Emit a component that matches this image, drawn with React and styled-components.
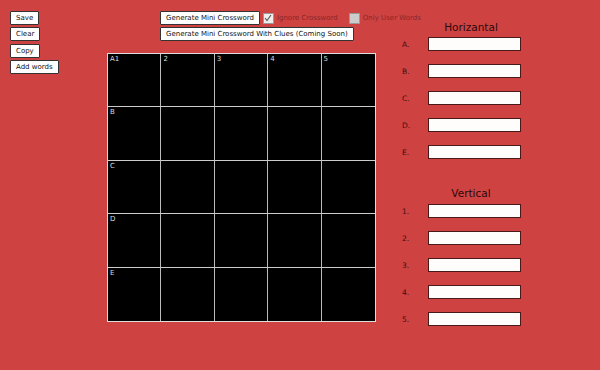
import styled, { createGlobalStyle } from "styled-components";

const Global = createGlobalStyle`
	html, body {
		margin: 0;
		padding: 0;
		background-color: #cf4242;
		font-family: "DejaVu Sans", sans-serif;
	}
`;

const Page = styled.div`
	width: 600px;
	height: 370px;
	display: flex;
	box-sizing: border-box;
	padding: 11px 0 0 10px;
`;

const Sidebar = styled.div`
	width: 97px;
	display: flex;
	flex-direction: column;
	align-items: flex-start;
	gap: 2px;
`;

const Button = styled.button`
	font-family: "DejaVu Sans", sans-serif;
	font-size: 7px;
	color: #111;
	background-color: #fff;
	border: 1px solid #333;
	border-radius: 1px;
	padding: 0 5px;
	height: 14px;
	line-height: 12px;
	margin-bottom: ${(p) => p.$mb || 0}px;
	cursor: pointer;
`;

const Main = styled.div`
	width: 269px;
	display: flex;
	flex-direction: column;
`;

const Controls = styled.div`
	display: flex;
	flex-direction: column;
	align-items: flex-start;
	gap: 2px;
	padding-left: 53px;
	height: 42px;
`;

const ControlRow = styled.div`
	display: flex;
	align-items: center;
	white-space: nowrap;
`;

const Check = styled.span`
	width: 9px;
	height: 9px;
	margin: 0 3px 0 3px;
	border: 1px solid #999;
	background-color: ${(p) => (p.$checked ? "#eee" : "#ccc")};
	display: inline-flex;
	align-items: center;
	justify-content: center;
	flex-shrink: 0;
`;

const CheckLabel = styled.span`
	font-size: 7px;
	color: #8a2727;
	margin-right: ${(p) => p.$mr || 0}px;
`;

const Grid = styled.div`
	width: 269px;
	height: 269px;
	display: grid;
	grid-template-columns: repeat(5, 1fr);
	grid-template-rows: repeat(5, 1fr);
	border: 1px solid #ddd;
	box-sizing: border-box;
	background-color: #000;
`;

const Cell = styled.div`
	background-color: #000;
	border-right: ${(p) => (p.$lastCol ? "none" : "1px solid #bbb")};
	border-bottom: ${(p) => (p.$lastRow ? "none" : "1px solid #ccc")};
	color: #ddd;
	font-size: 7px;
	padding: 1px 2px;
`;

const Panel = styled.div`
	width: 145px;
	margin-left: 19px;
	display: flex;
	flex-direction: column;
`;

const Title = styled.div`
	font-size: 10.5px;
	line-height: 13px;
	color: #2a0a0a;
	text-align: center;
	padding-left: 7px;
	margin-top: ${(p) => p.$mt}px;
	margin-bottom: ${(p) => p.$mb}px;
`;

const Row = styled.div`
	display: flex;
	align-items: center;
	height: 14px;
	margin-bottom: 13px;
`;

const Label = styled.span`
	width: 33px;
	padding-left: 7px;
	box-sizing: border-box;
	font-size: 7.5px;
	color: #3a0e0e;
`;

const Input = styled.input`
	width: 93px;
	height: 14px;
	box-sizing: border-box;
	border: 1px solid #4a1a1a;
	background-color: #fffdfc;
	padding: 0;
`;

const rows = ["A", "B", "C", "D", "E"];

const App = () => {
	return (
		<>
			<Global />
			<Page>
				<Sidebar>
					<Button>Save</Button>
					<Button $mb={1}>Clear</Button>
					<Button>Copy</Button>
					<Button>Add words</Button>
				</Sidebar>
				<Main>
					<Controls>
						<ControlRow>
							<Button>Generate Mini Crossword</Button>
							<Check $checked>
								<svg width="8" height="8" viewBox="0 0 8 8">
									<path d="M1 4 L3 6.5 L7 1" stroke="#555" strokeWidth="1.1" fill="none" />
								</svg>
							</Check>
							<CheckLabel $mr={8}>Ignore Crossword</CheckLabel>
							<Check />
							<CheckLabel>Only User Words</CheckLabel>
						</ControlRow>
						<ControlRow>
							<Button>Generate Mini Crossword With Clues (Coming Soon)</Button>
						</ControlRow>
					</Controls>
					<Grid>
						{rows.map((r, i) =>
							[0, 1, 2, 3, 4].map((c) => (
								<Cell key={r + c} $lastCol={c === 4} $lastRow={i === 4}>
									{i === 0 ? (c === 0 ? "A1" : c + 1) : c === 0 ? r : ""}
								</Cell>
							))
						)}
					</Grid>
				</Main>
				<Panel>
					<Title $mt={9.5} $mb={3.5}>Horizantal</Title>
					{rows.map((r) => (
						<Row key={r}>
							<Label>{r}.</Label>
							<Input />
						</Row>
					))}
					<Title $mt={14.5} $mb={4.5}>Vertical</Title>
					{[1, 2, 3, 4, 5].map((n) => (
						<Row key={n}>
							<Label>{n}.</Label>
							<Input />
						</Row>
					))}
				</Panel>
			</Page>
		</>
	);
};

export default App;
